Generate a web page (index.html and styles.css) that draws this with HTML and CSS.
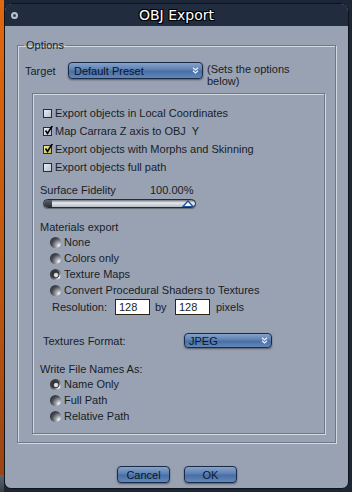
FILE: index.html
```html
<!doctype html>
<html lang="en">
<head>
  <meta charset="utf-8">
  <title>OBJ Export</title>
  <link rel="stylesheet" href="styles.css">
</head>
<body>
  <div class="window">
    <div class="titlebar">
      <span class="close-dot"></span>
      <h1>OBJ Export</h1>
    </div>
    <div class="content">
      <fieldset class="options">
        <legend>Options</legend>
        <div class="target-row">
          <span class="target-label">Target</span>
          <div class="popup popup-preset">
            <span>Default Preset</span>
            <svg class="popup-arrow" width="7" height="7" viewBox="0 0 7 7"><path d="M1 0.8 L3.5 3 L6 0.8 M1 3.8 L3.5 6 L6 3.8" fill="none" stroke="#eef2f8" stroke-width="1.2"/></svg>
          </div>
          <p class="hint">(Sets the options<br>below)</p>
        </div>

        <div class="inner">
          <div class="check-row">
            <span class="check"></span>
            <span>Export objects in Local Coordinates</span>
          </div>
          <div class="check-row">
            <span class="check">
              <svg width="9" height="9" viewBox="0 0 9 9"><path d="M1.5 4.5 L3.5 7.5 L8.5 -0.5" fill="none" stroke="#000" stroke-width="1.6"/></svg>
            </span>
            <span>Map Carrara Z axis to OBJ&nbsp; Y</span>
          </div>
          <div class="check-row">
            <span class="check check-yellow">
              <svg width="9" height="9" viewBox="0 0 9 9"><path d="M1.5 4.5 L3.5 7.5 L8.5 -0.5" fill="none" stroke="#000" stroke-width="1.6"/></svg>
            </span>
            <span>Export objects with Morphs and Skinning</span>
          </div>
          <div class="check-row">
            <span class="check"></span>
            <span>Export objects full path</span>
          </div>

          <div class="fidelity-row">
            <span class="fidelity-label">Surface Fidelity</span>
            <span>100.00%</span>
          </div>
          <div class="slider">
            <span class="slider-cap"></span>
            <svg class="slider-thumb" width="12" height="7" viewBox="0 0 12 7"><path d="M1 6.5 L6 1 L11 6.5 Z" fill="#f2f5fa" stroke="#1f4f9c" stroke-width="1.2"/></svg>
          </div>

          <div class="section-label">Materials export</div>
          <div class="radio-row"><span class="radio"></span><span>None</span></div>
          <div class="radio-row"><span class="radio"></span><span>Colors only</span></div>
          <div class="radio-row"><span class="radio radio-on"></span><span>Texture Maps</span></div>
          <div class="radio-row"><span class="radio"></span><span>Convert Procedural Shaders to Textures</span></div>

          <div class="res-row">
            <span class="res-label">Resolution:</span>
            <span class="field">128</span>
            <span class="res-by">by</span>
            <span class="field">128</span>
            <span class="res-px">pixels</span>
          </div>

          <div class="format-row">
            <span class="format-label">Textures Format:</span>
            <div class="popup popup-format">
              <span>JPEG</span>
              <svg class="popup-arrow" width="7" height="7" viewBox="0 0 7 7"><path d="M1 0.8 L3.5 3 L6 0.8 M1 3.8 L3.5 6 L6 3.8" fill="none" stroke="#eef2f8" stroke-width="1.2"/></svg>
            </div>
          </div>

          <div class="section-label names-label">Write File Names As:</div>
          <div class="radio-row"><span class="radio radio-on"></span><span>Name Only</span></div>
          <div class="radio-row"><span class="radio"></span><span>Full Path</span></div>
          <div class="radio-row"><span class="radio"></span><span>Relative Path</span></div>
        </div>
      </fieldset>

      <div class="buttons">
        <button class="btn">Cancel</button>
        <button class="btn">OK</button>
      </div>
    </div>
  </div>
</body>
</html>
```

FILE: styles.css
```css
html, body {
  margin: 0;
  height: 100%;
}

body {
  background-color: #1d2636;
  background-image:
    linear-gradient(#e2680e, #b8520f 70%, #9a4512),
    linear-gradient(#5d6470, #3a404a);
  background-size: 4px 475px, 4px 17px;
  background-position: 0 0, 0 475px;
  background-repeat: no-repeat;
  overflow: hidden;
  font-family: "Liberation Sans", "DejaVu Sans", sans-serif;
  font-size: 11px;
  color: #181d27;
}

.window {
  box-sizing: border-box;
  width: 345px;
  height: 486px;
  margin: 3px 0 0 4px;
  border: 1px solid #0e131c;
  border-radius: 8px 8px 7px 7px;
  background: #99a2b3;
  overflow: hidden;
  display: flex;
  flex-direction: column;
}

.titlebar {
  height: 22px;
  background: #222c3f;
  display: flex;
  align-items: center;
  justify-content: center;
  position: relative;
}

.close-dot {
  position: absolute;
  left: 6px;
  top: 8px;
  width: 3px;
  height: 3px;
  border: 2px solid #b9c0cc;
  border-radius: 50%;
  background: #3a4458;
}

h1 {
  margin: 0;
  font-family: "DejaVu Sans", sans-serif;
  font-size: 14px;
  font-weight: 400;
  color: #fff;
  text-shadow: 0 0 1px #000, 0 0 1px #000, 1px 1px 0 #000, -1px -1px 0 #000, 1px -1px 0 #000, -1px 1px 0 #000;
}

.content {
  flex: 1;
  display: flex;
  flex-direction: column;
}

.options {
  margin: 12px 12px 0 12px;
  padding: 0 0 8px 0;
  border: 1px solid #6f7889;
  box-shadow: inset 1px 1px 0 #d3d9e3, 1px 1px 0 #d3d9e3;
  min-width: 0;
}

.options legend {
  margin-left: 6px;
  padding: 0 2px;
  line-height: 14px;
}

.target-row {
  display: flex;
  align-items: flex-start;
  height: 27px;
  margin-top: 10px;
  padding-left: 7px;
}

.target-label {
  width: 43px;
  margin-top: 3px;
}

.popup {
  box-sizing: border-box;
  display: flex;
  align-items: center;
  justify-content: space-between;
  padding: 0 3px 0 5px;
  border: 1px solid #1a2b48;
  border-radius: 4px;
  background: linear-gradient(#86a2c8, #5c80b4 45%, #4a6ea3 55%, #6088bd);
  box-shadow: 0 1px 2px rgba(0, 0, 0, 0.45);
  color: #0b1628;
}

.popup-preset {
  width: 135px;
  height: 17px;
}

.popup-arrow {
  display: block;
}

.hint {
  margin: 1px 0 0 4px;
  line-height: 12px;
}

.inner {
  box-sizing: border-box;
  width: 293px;
  margin: 4px 0 0 14px;
  padding: 10px 0 9px 7px;
  border: 1px solid #6f7889;
  box-shadow: inset 1px 1px 0 #d3d9e3, 1px 1px 0 #d3d9e3;
}

.check-row {
  display: flex;
  align-items: center;
  height: 18px;
  margin-left: 3px;
}

.check {
  box-sizing: border-box;
  width: 9px;
  height: 9px;
  margin-right: 3px;
  border: 1px solid #1d2c4c;
  background: linear-gradient(135deg, #e9edf3, #b8c1cf);
  display: flex;
  align-items: center;
  justify-content: center;
  overflow: visible;
}

.check svg {
  flex: none;
  margin-top: -2px;
  margin-left: 1px;
}

.check-yellow {
  background: linear-gradient(135deg, #f1ea9a, #c9bd4e);
}

.fidelity-row {
  display: flex;
  align-items: center;
  height: 14px;
  margin-top: 7px;
}

.fidelity-label {
  width: 110px;
}

.slider {
  box-sizing: border-box;
  width: 153px;
  height: 9px;
  margin: 2px 0 0 3px;
  border: 1px solid #262b33;
  border-radius: 5px;
  background: linear-gradient(#6f757e, #e6e9ee 40%, #b4bac3);
  box-shadow: 0 1px 1px rgba(0, 0, 0, 0.35);
  display: flex;
  align-items: center;
  justify-content: space-between;
}

.slider-cap {
  width: 8px;
  height: 7px;
  border-radius: 4px 0 0 4px;
  background: linear-gradient(#5d626b, #2a2e35);
}

.slider-thumb {
  margin-right: 1px;
  margin-top: -1px;
}

.section-label {
  height: 14px;
  line-height: 14px;
  margin-top: 12px;
}

.radio-row {
  display: flex;
  align-items: center;
  height: 16px;
  margin-left: 10px;
}

.radio {
  box-sizing: border-box;
  width: 11px;
  height: 11px;
  margin-right: 3px;
  border-radius: 50%;
  background: radial-gradient(circle at 85% 80%, #ffffff 0, #a9acb2 25%, #45484e 60%, #222428 100%);
}

.radio-on {
  background:
    radial-gradient(circle at 55% 55%, #f4f4f4 0, #c8c8c8 22%, transparent 32%),
    radial-gradient(circle at 50% 50%, #303236 0, #303236 45%, transparent 55%),
    radial-gradient(circle at 85% 80%, #ffffff 0, #a9acb2 25%, #45484e 60%, #222428 100%);
}

.res-row {
  display: flex;
  align-items: center;
  height: 16px;
  margin-top: 1px;
  margin-left: 12px;
}

.res-label {
  width: 63px;
}

.field {
  box-sizing: border-box;
  width: 35px;
  height: 16px;
  padding: 1px 0 0 3px;
  border: 1px solid #2d2418;
  background: #fff;
}

.res-by {
  width: 25px;
  padding-left: 5px;
  box-sizing: border-box;
}

.res-px {
  padding-left: 6px;
}

.format-row {
  display: flex;
  align-items: center;
  height: 15px;
  margin-top: 18px;
  margin-left: 3px;
}

.format-label {
  width: 141px;
}

.popup-format {
  width: 88px;
  height: 15px;
  padding-left: 4px;
}

.names-label {
  margin-top: 14px;
}

.buttons {
  display: flex;
  justify-content: center;
  gap: 14px;
  margin-top: 23px;
  padding-left: 1px;
}

.btn {
  box-sizing: border-box;
  width: 53px;
  height: 17px;
  padding: 0;
  border: 1px solid #1a2b48;
  border-radius: 4px;
  background: linear-gradient(#86a2c8, #5c80b4 45%, #4a6ea3 55%, #6088bd);
  box-shadow: 0 1px 2px rgba(0, 0, 0, 0.45);
  color: #0b1628;
  font-family: "Liberation Sans", "DejaVu Sans", sans-serif;
  font-size: 11px;
}
```
